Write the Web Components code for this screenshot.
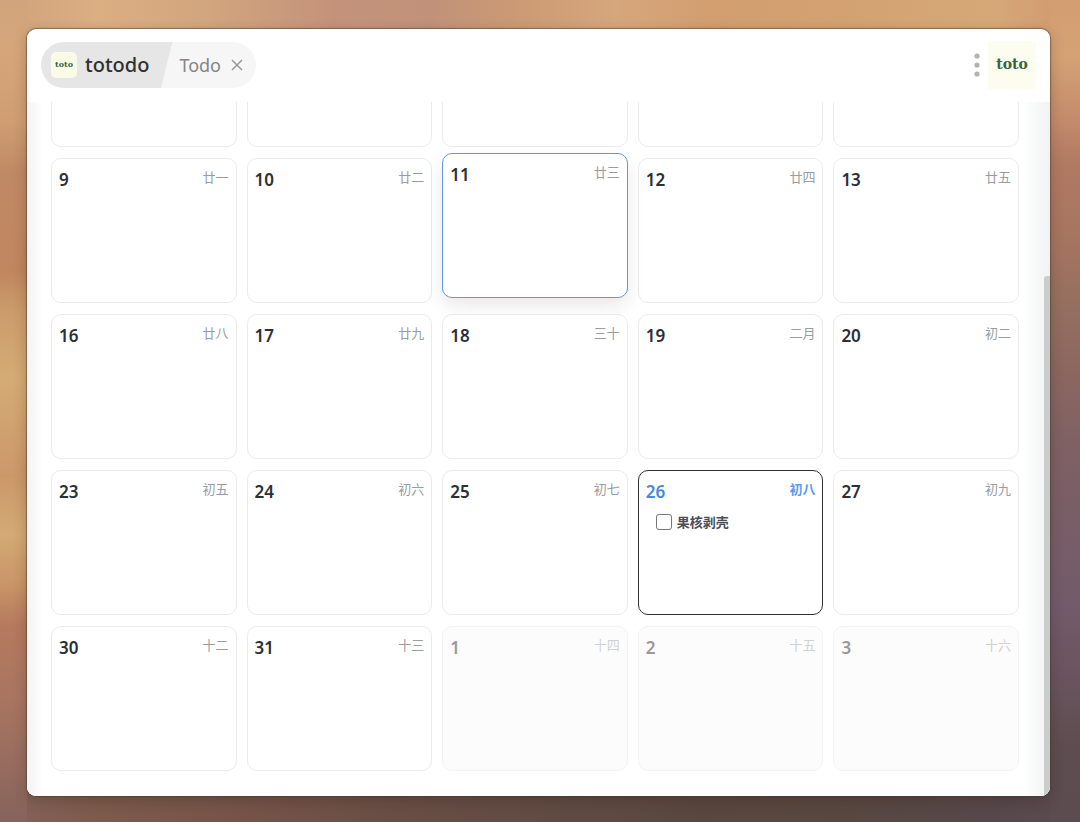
<!DOCTYPE html>
<html lang="zh-CN">
<head>
<meta charset="utf-8">
<meta name="viewport" content="width=device-width, initial-scale=1">
<title>totodo</title>
<style>
  html, body { margin: 0; height: 100%; }
  body { font-family: "Noto Sans", "Noto Sans CJK SC", sans-serif; color: #2b3036; }
</style>
</head>
<body>
<todo-desktop>
  <todo-window>
    <todo-header slot="header"></todo-header>
    <todo-calendar></todo-calendar>
  </todo-window>
</todo-desktop>

<script>
const define = (name, html, setup) => {
  const template = document.createElement('template');
  template.innerHTML = html;
  customElements.define(name, class extends HTMLElement {
    constructor() {
      super();
      this.attachShadow({ mode: 'open' }).append(template.content.cloneNode(true));
    }
    connectedCallback() { if (setup) setup(this, this.shadowRoot); }
  });
};

/* Wallpaper: one gradient for each side of the window */
define('todo-desktop', `
<style>
  :host {
    display: flex; box-sizing: border-box; height: 100vh; min-height: 400px; padding: 29px 30px 26px 27px;
    background:
      linear-gradient(to bottom, #d0a47e 0%, #d6a67a 6%, #cf9d72 15%, #c08966 21%, #c0875f 33%, #cc9c6c 38%, #d4ab75 46%, #cb986a 58%, #d3aa75 65%, #c99568 71%, #b67a5e 76%, #a87560 85%, #956b5f 94%, #85625a 100%) left / 27px 100% no-repeat,
      linear-gradient(to bottom, #d39d72 0%, #d4a275 7%, #c38a6a 15%, #b07a62 20%, #a57460 30%, #97705f 36%, #8a6660 46%, #7e6064 55%, #775d68 66%, #735a6a 74%, #67535c 84%, #5e4c4f 91%, #5b4c50 100%) right / 30px 100% no-repeat,
      linear-gradient(to right, #d0a47e 0%, #d3a67d 3%, #dcae82 9%, #d2a67e 19%, #c4927a 31%, #c19279 40%, #cc9a74 48%, #d6a67c 57%, #d29e70 66%, #d3a272 79%, #d6a878 92%, #d39d72 97%) top / 100% 50% no-repeat,
      linear-gradient(to right, #85625a 0%, #7c5a4c 9%, #755348 23%, #684e45 37%, #5e4a42 55%, #59473f 65%, #584741 79%, #56484b 93%, #5b4c50 100%) bottom / 100% 50% no-repeat;
  }
</style>
<slot></slot>`);

define('todo-window', `
<style>
  :host {
    display: flex; flex: 1; flex-direction: column; min-width: 0;
    border-radius: 9px; background: #fff; overflow: hidden;
    box-shadow: 0 0 1px 1px rgba(70, 60, 50, .5), 0 4px 14px rgba(40, 20, 10, .25);
  }
</style>
<slot name="header"></slot>
<slot></slot>`);

define('toto-logo', `
<style>
  :host {
    display: flex; align-items: center; justify-content: center;
    width: 48px; height: 48px; background: #fdfdef; color: #37663f;
    font: bold 14px/20px "DejaVu Serif", serif;
  }
  :host([small]) {
    width: 26px; height: 26px; border-radius: 5px; background: #f9fbe6;
    font-size: 8px; line-height: 12px;
  }
  span { padding-bottom: 2px; }
</style>
<span>toto</span>`);

define('todo-header', `
<style>
  :host { display: flex; flex: none; align-items: center; justify-content: space-between; height: 73px; padding: 0 14px 2px; box-sizing: border-box; }
  nav {
    display: flex; align-items: center; height: 46px; border-radius: 23px; overflow: hidden;
    background: linear-gradient(104deg, #e6e6e6 127px, #f6f6f6 128px);
  }
  a { color: inherit; text-decoration: none; }
  .app { display: flex; align-items: center; gap: 8px; padding-left: 10px; font-size: 20px; line-height: 28px; font-weight: 500; color: #303030; }
  .tab { padding-left: 30px; font-size: 18px; line-height: 26px; color: #858585; }
  button { display: flex; padding: 0; border: 0; background: none; color: #999; }
  .close { margin: 0 12px 0 9px; }
  .tools { display: flex; align-items: center; gap: 8px; }
</style>
<nav>
  <a class="app" href="#home"><toto-logo small></toto-logo><span>totodo</span></a>
  <a class="tab" href="#todo">Todo</a>
  <button class="close" aria-label="Close"><svg width="14" height="14" viewBox="0 0 14 14" fill="none" stroke="currentColor" stroke-width="1.5"><path d="M2 2l10 10M12 2L2 12"/></svg></button>
</nav>
<div class="tools">
  <button aria-label="Menu"><svg width="6" height="24" viewBox="0 0 6 24" fill="#b2b2b2"><circle cx="3" cy="3" r="2.6"/><circle cx="3" cy="12" r="2.6"/><circle cx="3" cy="21" r="2.6"/></svg></button>
  <toto-logo></toto-logo>
</div>`);

define('todo-day', `
<style>
  :host {
    display: block; box-sizing: border-box; min-width: 0; padding: 7px;
    border: 1px solid #ebebec; border-radius: 10px; background: #fff;
  }
  header { display: flex; justify-content: space-between; }
  .num { font-size: 17px; line-height: 28px; font-weight: 600; }
  .lunar { font-size: 13px; line-height: 22px; color: #999ca0; }
  :host([hover]) { border-color: #5d9ae0; transform: translateY(-5px); box-shadow: 0 8px 18px rgba(0, 0, 0, .09); }
  :host([today]) { border-color: #303030; }
  :host([today]) .num { color: #4389e0; }
  :host([today]) .lunar { color: #5b9bf0; font-weight: 700; }
  :host([outside]) { background: #fcfcfc; border-color: #f3f3f3; }
  :host([outside]) .num { color: #98999b; }
  :host([outside]) .lunar { color: #d0d1d3; }
</style>
<header><span class="num"></span><span class="lunar"></span></header>
<slot></slot>`, (host, root) => {
  root.querySelector('.num').textContent = host.getAttribute('num') || '';
  root.querySelector('.lunar').textContent = host.getAttribute('lunar') || '';
});

define('todo-task', `
<style>
  :host { display: block; padding: 5px 0 0 10px; }
  label { display: flex; align-items: center; gap: 5px; font-size: 13px; line-height: 22px; font-weight: 700; color: #4a4e58; }
  input { appearance: none; box-sizing: border-box; width: 16px; height: 16px; margin: 0; border: 1px solid #777; border-radius: 3px; background: #fff; }
  input:checked { background: #4389e0; }
</style>
<label><input type="checkbox"><span><slot></slot></span></label>`);

define('todo-calendar', `
<style>
  :host { display: block; position: relative; flex: 1; min-height: 0; }
  .scroll {
    box-sizing: border-box; height: 100%; overflow-y: auto; scrollbar-width: none;
    background: linear-gradient(to right, #f3f3f4, transparent 16px), linear-gradient(to left, #f1f2f3, transparent 28px), #fff;
  }
  .grid {
    display: grid; grid-template-columns: repeat(5, minmax(0, 1fr)); grid-auto-rows: 145px;
    gap: 11px 10px; padding: 0 31px 25px 24px;
  }
  .thumb { position: absolute; right: 0; bottom: 0; width: 6px; height: 75%; border-radius: 3px 0 0 0; background: #cbcccc; }
</style>
<div class="scroll"><div class="grid">
  <todo-day></todo-day><todo-day></todo-day><todo-day></todo-day><todo-day></todo-day><todo-day></todo-day>
  <todo-day num="9" lunar="廿一"></todo-day>
  <todo-day num="10" lunar="廿二"></todo-day>
  <todo-day num="11" lunar="廿三" hover></todo-day>
  <todo-day num="12" lunar="廿四"></todo-day>
  <todo-day num="13" lunar="廿五"></todo-day>
  <todo-day num="16" lunar="廿八"></todo-day>
  <todo-day num="17" lunar="廿九"></todo-day>
  <todo-day num="18" lunar="三十"></todo-day>
  <todo-day num="19" lunar="二月"></todo-day>
  <todo-day num="20" lunar="初二"></todo-day>
  <todo-day num="23" lunar="初五"></todo-day>
  <todo-day num="24" lunar="初六"></todo-day>
  <todo-day num="25" lunar="初七"></todo-day>
  <todo-day num="26" lunar="初八" today><todo-task>果核剥壳</todo-task></todo-day>
  <todo-day num="27" lunar="初九"></todo-day>
  <todo-day num="30" lunar="十二"></todo-day>
  <todo-day num="31" lunar="十三"></todo-day>
  <todo-day num="1" lunar="十四" outside></todo-day>
  <todo-day num="2" lunar="十五" outside></todo-day>
  <todo-day num="3" lunar="十六" outside></todo-day>
</div></div>
<div class="thumb"></div>`, (host, root) => {
  const scroll = root.querySelector('.scroll');
  const toEnd = () => { scroll.scrollTop = scroll.scrollHeight; };
  toEnd();
  addEventListener('load', toEnd);
});
</script>
</body>
</html>
